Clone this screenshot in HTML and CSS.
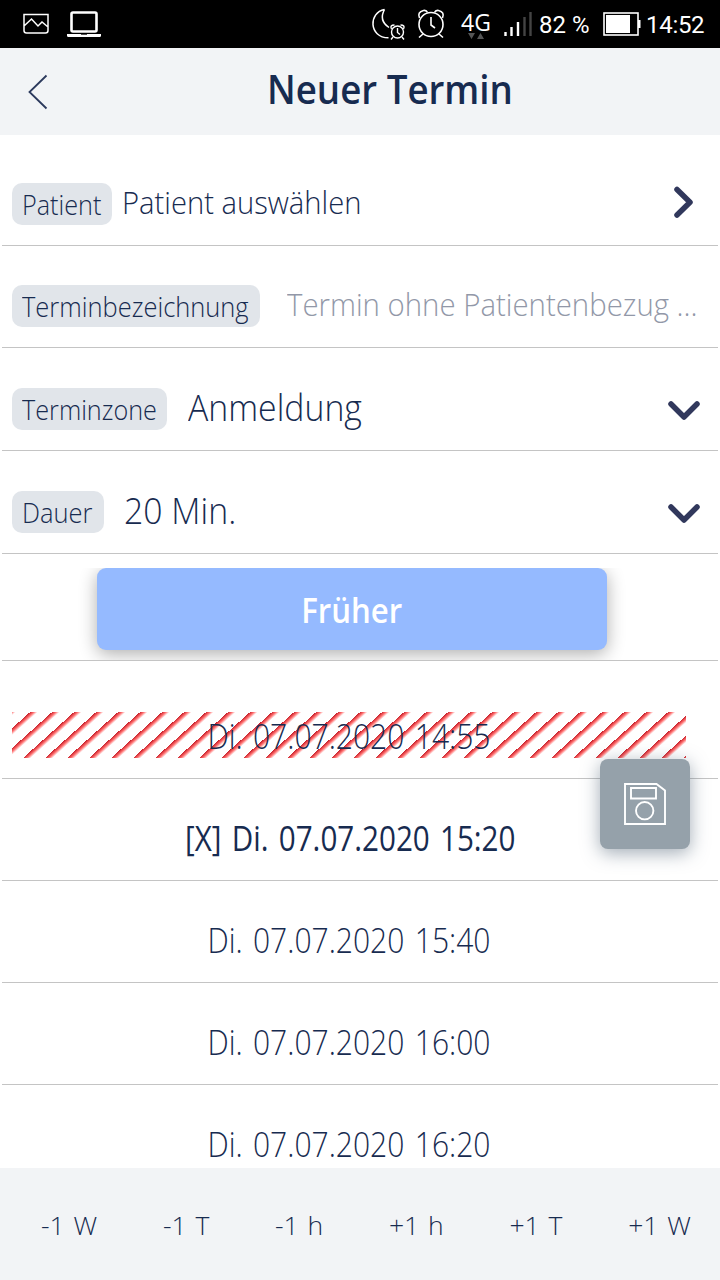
FILE: index.html
```html
<!DOCTYPE html>
<html lang="de">
<head>
<meta charset="utf-8">
<title>Neuer Termin</title>
<link rel="stylesheet" href="styles.css">
</head>
<body>
<div class="status">
  <svg class="status-icons" width="720" height="48" viewBox="0 0 720 48" fill="none" stroke="#fff">
    <path d="M24 14.500h24v16q0 2.500-2.500 2.500h-19q-2.500 0-2.500-2.500zM24 26l7.500-7 6.500 7 4-4 6 5" stroke-width="1.500"/>
    <rect x="71.500" y="12.500" width="25" height="19" rx="1.500" stroke-width="2.600"/>
    <path d="M67 34h34v1.500q0 1.500-1.500 1.500h-31q-1.500 0-1.500-1.500z" fill="#fff" stroke="none"/>
    <path d="M81 34.500h6" stroke="#555"/>
    <path d="M384.500 9.500c-16 3-16 28 4 28.300M384.500 9.500q-6 11 4.500 18" stroke-width="1.500"/>
    <g stroke-width="1.400"><circle cx="397.500" cy="32" r="6"/><path d="M397.500 28v4.500l2.500 2M391.500 29q-2-4 3-4M403.500 29q2-4-3-4M393 37l-2 2.500M402 37l2 2.500"/></g>
    <g stroke-width="1.600"><circle cx="431" cy="24.500" r="12"/><path d="M431 17v8l4 3M419.500 18q-2.500-6 4-7.500 3-.5 4 2M442.500 18q2.500-6-4-7.500-3-.5-4 2M423 34l-4 3.500M439 34l4 3.500"/></g>
    <path d="M468 33h7l-3.500 6zM477 39h7l-3.500-6z" fill="#555" stroke="none"/>
    <path d="M505.500 32v4M511.500 27v9M518 22v14" stroke-width="2.400"/>
    <path d="M524.500 17v19M530.500 12v24" stroke="#444" stroke-width="2.400"/>
    <rect x="604" y="13" width="34" height="22" stroke-width="1.600"/>
    <path d="M606 15h24v18h-24zM638 20h2.500v8h-2.500z" fill="#fff" stroke="none"/>
  </svg>
  <span class="net">4G</span><span class="pct">82 %</span><span class="clock">14:52</span>
</div>
<header class="header">
  <svg class="back" width="20" height="36" viewBox="0 0 20 36"><path d="M18.500 1.500 1.500 18l17 16.500" fill="none" stroke="#2b395c" stroke-width="1.800"/></svg>
  <h1 class="title">Neuer Termin</h1>
</header>
<main class="content">
  <div class="field first"><span class="tag t1"><span>Patient</span></span><span class="value v1">Patient auswählen</span>
    <svg class="chev" width="32" height="36" viewBox="0 0 32 36"><path d="M9 4.500 22 17.300 9 30" /></svg></div>
  <div class="field"><span class="tag t2"><span>Terminbezeichnung</span></span><span class="value v2">Termin ohne Patientenbezug ...</span></div>
  <div class="field tall"><span class="tag t3"><span>Terminzone</span></span><span class="value v3">Anmeldung</span>
    <svg class="chev" width="32" height="36" viewBox="0 0 32 36"><path d="M3 12 16 25 29 12" /></svg></div>
  <div class="field tall"><span class="tag t4"><span>Dauer</span></span><span class="value v4">20 Min.</span>
    <svg class="chev" width="32" height="36" viewBox="0 0 32 36"><path d="M3 12 16 25 29 12" /></svg></div>
  <div class="earlier-row"><button class="earlier"><span>Früher</span></button></div>
  <div class="slot blocked"><span class="stripes"><span class="time">Di. 07.07.2020 14:55</span></span></div>
  <div class="slot selected"><span class="time">[X] Di. 07.07.2020 15:20</span></div>
  <div class="slot"><span class="time">Di. 07.07.2020 15:40</span></div>
  <div class="slot"><span class="time">Di. 07.07.2020 16:00</span></div>
  <div class="slot"><span class="time">Di. 07.07.2020 16:20</span></div>
</main>
<button class="save" aria-label="Speichern">
  <svg width="42" height="42" viewBox="0 0 42 42" fill="none" stroke="#fff" stroke-width="1.900"><path d="M1 1h31.500L41 7.500V41H1zM7 5h25v10.500H7z"/><circle cx="20.700" cy="27.700" r="8.700"/></svg>
</button>
<nav class="footer">
  <span>-1 W</span><span>-1 T</span><span>-1 h</span><span>+1 h</span><span>+1 T</span><span>+1 W</span>
</nav>
</body>
</html>
```
FILE: styles.css
```css
* { box-sizing: border-box; }
body { margin: 0; width: 720px; height: 1280px; overflow: hidden; display: flex; flex-direction: column; position: relative; background: #fff; color: #172b50; font-family: "Open Sans", "Noto Sans", sans-serif; font-weight: 300; }
button { font: inherit; border: 0; padding: 0; }
.status { position: relative; flex: none; height: 48px; background: #000; color: #fff; font: 400 24px/48px Roboto, sans-serif; }
.status-icons { position: absolute; left: 0; top: 0; }
.status span { position: absolute; top: 1px; white-space: nowrap; }
.status .net { left: 461px; top: -2px; font-family: "Open Sans", sans-serif; font-size: 23px; }
.status .pct { left: 539px; }
.status .clock { left: 646px; letter-spacing: -.3px; }
.header { flex: none; height: 87px; background: #f2f4f6; display: flex; align-items: center; }
.back { margin-left: 28px; }
.title { margin: 0 0 6px 219px; font-size: 40px; font-weight: 600; line-height: 50px; white-space: nowrap; transform: scaleX(.917); transform-origin: left; }
.content { flex: 1; min-height: 0; overflow: hidden; padding: 0 2px; }
.field { height: 102px; padding: 0 18px 20px 10px; border-bottom: 1px solid #c4c4c4; display: flex; align-items: flex-end; }
.field.first { height: 111px; }
.field.tall { height: 103px; }
.tag { height: 42px; background: #e1e5ea; border-radius: 10px; padding-left: 10px; font-size: 27px; line-height: 44px; white-space: nowrap; flex: none; }
.tag span { display: inline-block; transform: scaleX(.943); transform-origin: left; }
.t1 { width: 100px; } .t2 { width: 248px; } .t3 { width: 155px; } .t4 { width: 92px; }
.t1 span, .t3 span { transform: scaleX(.934); }
.value { white-space: nowrap; line-height: 42px; padding-bottom: 2px; font-size: 32px; transform: scaleX(.912); transform-origin: left; }
.v1 { margin-left: 10px; }
.v2 { margin-left: 27px; color: #9298a8; transform: scaleX(.918); }
.v3, .v4 { margin-left: 21px; font-size: 36.5px; transform: scaleX(.926); }
.v4 { margin-left: 20px; }
.chev { margin-left: auto; margin-bottom: 2px; fill: none; stroke: #31385c; stroke-width: 5.500; stroke-linecap: round; stroke-linejoin: round; }
.first .chev { margin-bottom: 4px; }
.earlier-row { height: 107px; border-bottom: 1px solid #c4c4c4; padding-top: 14px; }
.earlier { display: block; width: 510px; height: 82px; margin-left: 95px; border-radius: 9px; background: #95baff; color: #fff; font-size: 35px; font-weight: 600; box-shadow: 0 4px 18px rgba(0,0,0,.32); clip-path: inset(0 -30px -10px); }
.earlier span { display: inline-block; transform: scaleX(.89); }
.slot { height: 102px; border-bottom: 1px solid #c4c4c4; padding: 36px 22px 0 0; text-align: center; font-size: 35px; line-height: 46px; white-space: nowrap; }
.slot .time { display: inline-block; word-spacing: 3px; transform: scaleX(.858); }
.blocked { height: 118px; padding: 51px 32px 0 10px; }
.stripes { display: block; height: 46px; line-height: 48px; background: repeating-linear-gradient(138deg, #c8202a -2.6px, #ff7070 0, #fff 2.5px, #fff 12.12px); }
.selected { font-weight: 400; padding-right: 20px; }
.selected .time { transform: scaleX(.846); }
.save { position: absolute; left: 600px; top: 759px; width: 90px; height: 90px; border-radius: 8px; background: #95a1aa; box-shadow: 0 4px 18px rgba(70,90,110,.5); display: flex; align-items: center; justify-content: center; }
.footer { flex: none; height: 112px; background: #f2f4f6; display: flex; justify-content: space-between; padding: 39px 29px 0 41px; font-size: 26.5px; line-height: 36px; word-spacing: 2px; }
```
